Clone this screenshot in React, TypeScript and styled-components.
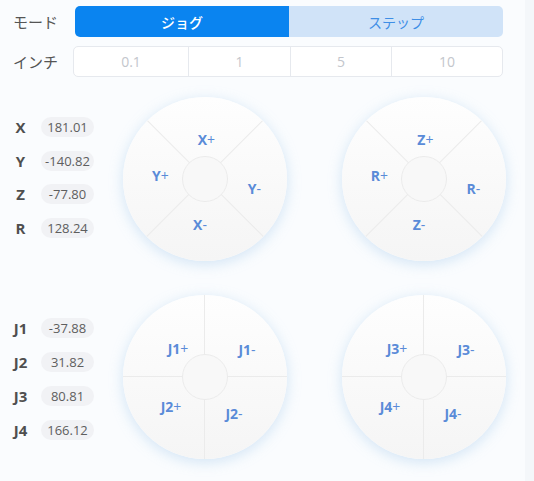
import React from "react";
import styled, { createGlobalStyle, css } from "styled-components";

const GlobalStyle = createGlobalStyle`
  html, body { margin: 0; padding: 0; background: #fafcfe; }
  body { font-family: "Open Sans", "Noto Sans CJK JP", sans-serif; }
  * { box-sizing: border-box; }
`;

const Shell = styled.div`
  display: flex;
  width: 534px;
  height: 481px;
  background: #fafcfe;
  overflow: hidden;
`;

const Panel = styled.div`
  flex: 1;
  display: flex;
  flex-direction: column;
  padding-top: 6px;
`;

const ScrollTrack = styled.div`
  width: 9px;
  background: #f4f7fa;
`;

const ControlRow = styled.div<{ $mt?: number }>`
  display: flex;
  align-items: center;
  height: 31px;
  margin-top: ${(p) => p.$mt ?? 0}px;
`;

const RowLabel = styled.div`
  width: 75px;
  padding-left: 13px;
  font-family: "Noto Sans CJK JP", sans-serif;
  font-size: 15px;
  color: #555;
`;

const Segmented = styled.div`
  display: grid;
  grid-template-columns: 214px 214px;
  height: 31px;
`;

const SegButton = styled.button<{ $active?: boolean }>`
  border: none;
  margin: 0;
  font-family: "Noto Sans CJK JP", sans-serif;
  font-size: 14px;
  cursor: pointer;
  ${(p) =>
    p.$active
      ? css`
          background: #0a84f0;
          color: #fff;
          font-weight: 500;
          border-radius: 5px 0 0 5px;
        `
      : css`
          background: #d0e3f8;
          color: #3e8ee6;
          border-radius: 0 5px 5px 0;
        `}
`;

const StepGroup = styled.div`
  display: grid;
  grid-template-columns: 114px 102px 101px 111px;
  height: 31px;
  margin-left: -2px;
  background: #fff;
  border: 1px solid #e6e9ee;
  border-radius: 5px;
  overflow: hidden;
`;

const StepCell = styled.div<{ $first?: boolean }>`
  display: flex;
  align-items: center;
  justify-content: center;
  font-size: 14px;
  color: #c3c6cc;
  border-left: ${(p) => (p.$first ? "none" : "1px solid #e6e9ee")};
`;

const JogSection = styled.div<{ $mt: number }>`
  display: flex;
  align-items: center;
  margin-top: ${(p) => p.$mt}px;
  height: 164px;
`;

const Readouts = styled.div<{ $gap: number; $shift: number }>`
  display: flex;
  flex-direction: column;
  gap: ${(p) => p.$gap}px;
  width: 94px;
  padding-left: 8px;
  margin-top: ${(p) => p.$shift}px;
`;

const ReadoutRow = styled.div`
  display: flex;
  align-items: center;
  height: 20px;
`;

const AxisName = styled.div`
  width: 25px;
  text-align: center;
  font-size: 15px;
  font-weight: 700;
  color: #4f4f4f;
`;

const ValuePill = styled.div`
  margin-left: 8px;
  width: 53px;
  height: 20px;
  border-radius: 10px;
  background: #f1f2f5;
  display: flex;
  align-items: center;
  justify-content: center;
  font-size: 13px;
  color: #5e5e5e;
`;

const Dials = styled.div`
  display: flex;
  gap: 55px;
  margin-left: 29px;
`;

const DialFace = styled.div`
  position: relative;
  width: 164px;
  height: 164px;
  border-radius: 50%;
  overflow: hidden;
  background: linear-gradient(180deg, #fefefe 0%, #f9f9f9 55%, #f5f5f5 100%);
  box-shadow: 0 3px 14px rgba(150, 195, 232, 0.4);
`;

const QuadGrid = styled.div<{ $rot: boolean }>`
  display: grid;
  grid-template-columns: 1fr 1fr;
  grid-template-rows: 1fr 1fr;
  width: 164px;
  height: 164px;
  transform: rotate(${(p) => (p.$rot ? 45 : 0)}deg);
`;

const Quadrant = styled.button<{ $r?: boolean; $b?: boolean }>`
  position: relative;
  border: none;
  margin: 0;
  padding: 0;
  background: transparent;
  cursor: pointer;
  border-right: ${(p) => (p.$r ? "1px solid #ebebeb" : "none")};
  border-bottom: ${(p) => (p.$b ? "1px solid #ebebeb" : "none")};
`;

const QuadLabel = styled.span<{ $rot: boolean }>`
  position: absolute;
  transform: translate(-50%, -50%) rotate(${(p) => (p.$rot ? -45 : 0)}deg);
  font-family: "Open Sans", sans-serif;
  font-size: 14px;
  font-weight: 700;
  color: #5a8bd8;
  white-space: nowrap;
`;

const Sign = styled.span`
  font-weight: 400;
`;

const Hub = styled.div`
  position: absolute;
  left: 50%;
  top: 50%;
  width: 46px;
  height: 46px;
  margin: -23px 0 0 -23px;
  border-radius: 50%;
  background: #f8f8f8;
  border: 1px solid #ebebeb;
`;

type DialProps = { labels: [string, string, string, string]; rotated?: boolean };

// label centres inside each 82px cell: TL, TR, BL, BR
const spots: [number, number][] = [
  [55, 53],
  [42, 54],
  [48, 29],
  [29, 36],
];

const Dial: React.FC<DialProps> = ({ labels, rotated = false }) => (
  <DialFace>
    <QuadGrid $rot={rotated}>
      {labels.map((l, i) => (
        <Quadrant key={l} $r={i % 2 === 0} $b={i < 2}>
          <QuadLabel $rot={rotated} style={{ left: spots[i][0], top: spots[i][1] }}>
            {l.slice(0, -1)}
            <Sign>{l.slice(-1)}</Sign>
          </QuadLabel>
        </Quadrant>
      ))}
    </QuadGrid>
    <Hub />
  </DialFace>
);

const cart = [
  ["X", "181.01"],
  ["Y", "-140.82"],
  ["Z", "-77.80"],
  ["R", "128.24"],
];
const joints = [
  ["J1", "-37.88"],
  ["J2", "31.82"],
  ["J3", "80.81"],
  ["J4", "166.12"],
];

export default function App() {
  return (
    <>
      <GlobalStyle />
      <Shell>
        <Panel>
          <ControlRow>
            <RowLabel>モード</RowLabel>
            <Segmented>
              <SegButton $active>ジョグ</SegButton>
              <SegButton>ステップ</SegButton>
            </Segmented>
          </ControlRow>
          <ControlRow $mt={9}>
            <RowLabel>インチ</RowLabel>
            <StepGroup>
              {["0.1", "1", "5", "10"].map((s, i) => (
                <StepCell key={s} $first={i === 0}>
                  {s}
                </StepCell>
              ))}
            </StepGroup>
          </ControlRow>
          <JogSection $mt={20}>
            <Readouts $gap={13.7} $shift={-3}>
              {cart.map(([n, v]) => (
                <ReadoutRow key={n}>
                  <AxisName>{n}</AxisName>
                  <ValuePill>{v}</ValuePill>
                </ReadoutRow>
              ))}
            </Readouts>
            <Dials>
              <Dial rotated labels={["X+", "Y-", "Y+", "X-"]} />
              <Dial rotated labels={["Z+", "R-", "R+", "Z-"]} />
            </Dials>
          </JogSection>
          <JogSection $mt={34}>
            <Readouts $gap={14} $shift={3}>
              {joints.map(([n, v]) => (
                <ReadoutRow key={n}>
                  <AxisName>{n}</AxisName>
                  <ValuePill>{v}</ValuePill>
                </ReadoutRow>
              ))}
            </Readouts>
            <Dials>
              <Dial labels={["J1+", "J1-", "J2+", "J2-"]} />
              <Dial labels={["J3+", "J3-", "J4+", "J4-"]} />
            </Dials>
          </JogSection>
        </Panel>
        <ScrollTrack />
      </Shell>
    </>
  );
}
